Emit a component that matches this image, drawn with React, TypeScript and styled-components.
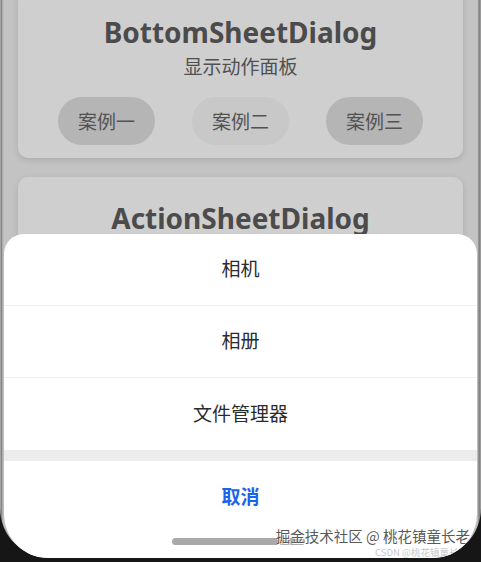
import styled, {createGlobalStyle} from "styled-components";

const GlobalStyle = createGlobalStyle`
  html, body {
    margin: 0;
    padding: 0;
    background: #161616;
  }

  body {
    font-family: "Noto Sans", "Noto Sans CJK SC", sans-serif;
    width: 481px;
    height: 562px;
    overflow: hidden;
  }
`;

const StyledBezel = styled.div`
  width: 481px;
  height: 558px;
  box-sizing: border-box;
  padding: 0 4px;
  border-radius: 0 0 50px 50px;
  background: linear-gradient(to right, #d8d8d8 0, #6e6e6e 1px, #9c9c9c 2px, #bdbdbd 3px,
  #bdbdbd 478px, #6e6e6e 479px, #9a9a9a 480px);
`;

const StyledScreen = styled.div`
  position: relative;
  height: 100%;
  overflow: hidden;
  border-radius: 0 0 44px 44px;
  background: #c3c3c3;
  display: flex;
  flex-direction: column;
  gap: 19px;
`;

const StyledCard = styled.div<{ $top?: string, $pad?: string }>`
  margin: ${props => props.$top || '0'} 14px 0 14px;
  padding: ${props => props.$pad || '26px 0 13px 0'};
  border-radius: 10px;
  background: #cfcfcf;
  box-shadow: 0 2px 6px rgba(0, 0, 0, .12);
  display: flex;
  flex-direction: column;
  align-items: center;
`;

const StyledTitle = styled.div`
  font-family: "Noto Sans", sans-serif;
  font-size: 28px;
  line-height: 36px;
  font-weight: bold;
  color: #4b4b4b;
`;

const StyledSubtitle = styled.div`
  font-family: "Noto Sans CJK SC", sans-serif;
  font-size: 19px;
  line-height: 24px;
  margin-top: 4px;
  color: #505050;
`;

const StyledButtonRow = styled.div`
  display: flex;
  justify-content: center;
  gap: 37px;
  margin-top: 19px;
`;

const StyledCaseButton = styled.div<{ $light?: boolean }>`
  width: 97px;
  height: 48px;
  border-radius: 24px;
  background: ${props => props.$light ? '#c8c8c8' : '#b5b5b5'};
  color: #525252;
  font-family: "Noto Sans CJK SC", sans-serif;
  font-size: 19px;
  display: flex;
  align-items: center;
  justify-content: center;
  padding-bottom: 2px;
  box-sizing: border-box;
`;

const StyledSheet = styled.div`
  position: absolute;
  left: 0;
  right: 0;
  bottom: 0;
  height: 324px;
  background: #ffffff;
  border-radius: 20px 20px 0 0;
  display: flex;
  flex-direction: column;
`;

const StyledSheetItem = styled.div<{ $last?: boolean }>`
  height: 72px;
  box-sizing: border-box;
  padding-bottom: 4px;
  flex-shrink: 0;
  display: flex;
  align-items: center;
  justify-content: center;
  font-family: "Noto Sans CJK SC", sans-serif;
  font-size: 19px;
  color: #2b2b2b;
  border-bottom: ${props => props.$last ? 'none' : '1px solid #efefef'};
`;

const StyledSheetGap = styled.div`
  height: 11px;
  flex-shrink: 0;
  background: #ececec;
`;

const StyledCancel = styled.div`
  height: 72px;
  box-sizing: border-box;
  padding-bottom: 4px;
  display: flex;
  align-items: center;
  justify-content: center;
  font-family: "Noto Sans CJK SC", sans-serif;
  font-size: 19px;
  font-weight: bold;
  color: #1b63e8;
`;

const StyledHomeBar = styled.div`
  width: 133px;
  height: 7px;
  border-radius: 4px;
  background: #a9a9a9;
  margin: 5px 0 0 168px;
`;

const StyledWatermark = styled.div`
  position: absolute;
  right: 7px;
  bottom: 1px;
  display: flex;
  flex-direction: column;
  align-items: flex-end;
  gap: 3px;
  font-family: "Noto Sans CJK SC", sans-serif;
  pointer-events: none;
`;

const StyledWatermarkMain = styled.div`
  font-size: 14.5px;
  line-height: 16px;
  color: #5a5a5a;
  text-shadow: 0 0 1px #fff, 1px 1px 0 #fff;
`;

const StyledWatermarkSub = styled.div`
  font-size: 9.5px;
  line-height: 10px;
  color: #c8c8c8;
  margin-right: 2px;
`;

export default function App() {
    const items = ["相机", "相册", "文件管理器"];

    return (
        <>
            <GlobalStyle/>
            <StyledBezel>
                <StyledScreen>
                    <StyledCard $top={"-12px"}>
                        <StyledTitle>BottomSheetDialog</StyledTitle>
                        <StyledSubtitle>显示动作面板</StyledSubtitle>
                        <StyledButtonRow>
                            <StyledCaseButton>案例一</StyledCaseButton>
                            <StyledCaseButton $light>案例二</StyledCaseButton>
                            <StyledCaseButton>案例三</StyledCaseButton>
                        </StyledButtonRow>
                    </StyledCard>
                    <StyledCard $pad={"23px 0 60px 0"}>
                        <StyledTitle>ActionSheetDialog</StyledTitle>
                    </StyledCard>

                    <StyledSheet>
                        {items.map((item, i) =>
                            <StyledSheetItem key={item} $last={i === items.length - 1}>{item}</StyledSheetItem>
                        )}
                        <StyledSheetGap/>
                        <StyledCancel>取消</StyledCancel>
                        <StyledHomeBar/>
                    </StyledSheet>

                    <StyledWatermark>
                        <StyledWatermarkMain>掘金技术社区 @ 桃花镇童长老</StyledWatermarkMain>
                        <StyledWatermarkSub>CSDN @桃花镇童长老</StyledWatermarkSub>
                    </StyledWatermark>
                </StyledScreen>
            </StyledBezel>
        </>
    )
}
